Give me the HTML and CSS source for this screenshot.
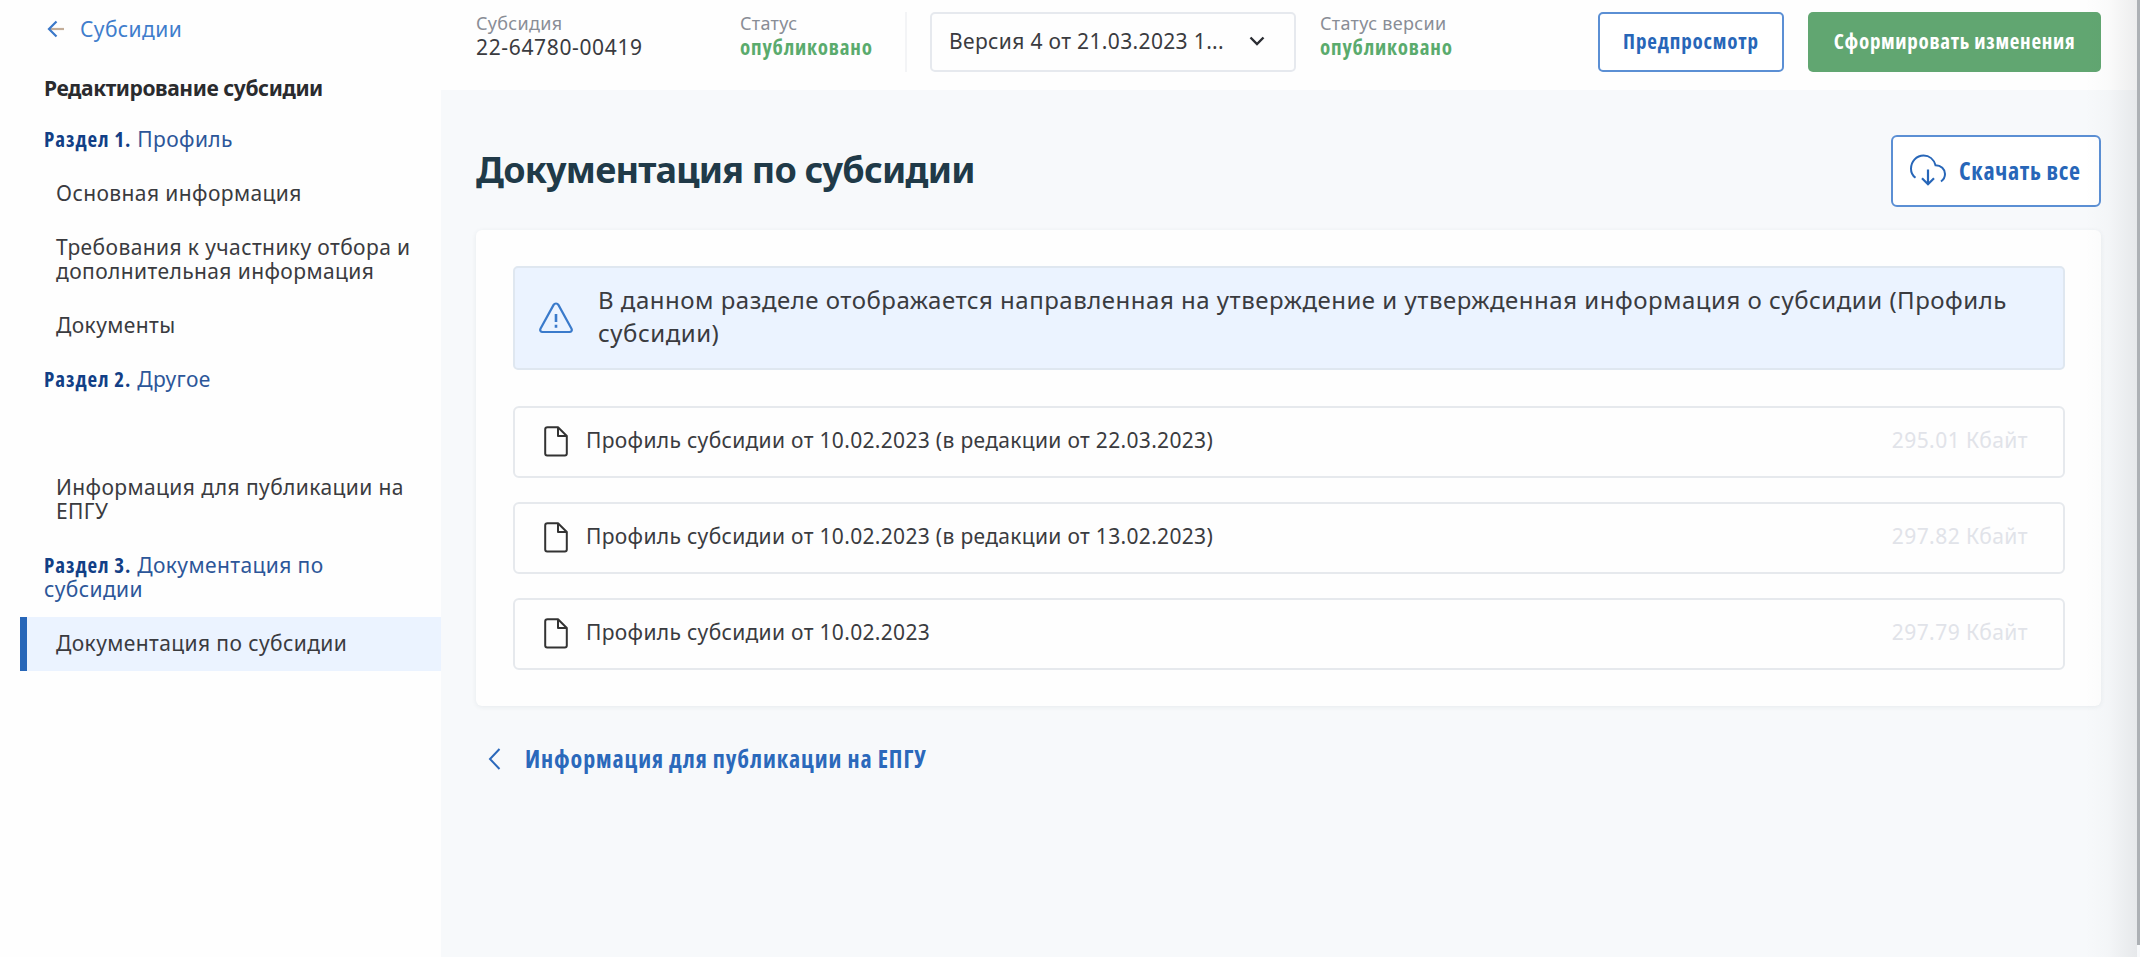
FILE: index.html
```html
<!DOCTYPE html>
<html lang="ru">
<head>
<meta charset="utf-8">
<title>Документация по субсидии</title>
<link rel="stylesheet" href="styles.css">
</head>
<body>
<div class="app">
  <aside class="sidebar">
    <a class="back">
      <svg class="back-icon" width="18" height="18" viewBox="0 0 18 18" fill="none" stroke-width="2.2"><path d="M3 9h14" stroke="#c3ad98"/><path d="M9.500 1.500 2 9l7.500 7.500" stroke="#3b78c9"/></svg>
      <span>Субсидии</span>
    </a>
    <div class="side-title">Редактирование субсидии</div>
    <nav class="nav">
      <div class="nav-section"><b>Раздел 1.</b> Профиль</div>
      <a class="nav-item">Основная информация</a>
      <a class="nav-item">Требования к участнику отбора и<br>дополнительная информация</a>
      <a class="nav-item">Документы</a>
      <div class="nav-section"><b>Раздел 2.</b> Другое</div>
      <a class="nav-item nav-empty"></a>
      <a class="nav-item">Информация для публикации на<br>ЕПГУ</a>
      <div class="nav-section"><b>Раздел 3.</b> Документация по<br>субсидии</div>
      <a class="nav-item active">Документация по субсидии</a>
    </nav>
  </aside>
  <div class="page">
    <header class="topbar">
      <div class="field field-id"><div class="label">Субсидия</div><div class="value">22-64780-00419</div></div>
      <div class="field field-status"><div class="label">Статус</div><div class="status">опубликовано</div></div>
      <div class="select"><span>Версия 4 от 21.03.2023 1...</span>
        <svg width="16" height="12" viewBox="0 0 16 12" fill="none" stroke="#2b2d33" stroke-width="2.400"><path d="M1.500 2.500 8 9l6.500-6.500"/></svg>
      </div>
      <div class="field field-version"><div class="label">Статус версии</div><div class="status">опубликовано</div></div>
      <button class="btn btn-outline">Предпросмотр</button>
      <button class="btn btn-green">Сформировать изменения</button>
    </header>
    <main class="content">
      <div class="heading">
        <h1>Документация по субсидии</h1>
        <button class="download">
          <svg width="36" height="32" viewBox="0 0 36 32" fill="none" stroke="#2766b8" stroke-width="2"><path d="M5.500 23.800C2.900 22 1 18.800 1 14.800 1 7.400 6.500 1.500 13.600 1.500c5.700 0 10.300 3.900 11.900 9.700C31 11.300 35 15.200 35 20c0 3.100-1.500 5.700-4 7.500"/><path d="M18 15.500v14.500M12 24.300l6 6 6-6" stroke-width="2.200"/></svg>
          <span>Скачать все</span>
        </button>
      </div>
      <section class="card">
        <div class="alert">
          <svg width="34" height="32" viewBox="0 0 34 32" fill="none" stroke="#3a7acb" stroke-width="2.200"><path d="M14.600 2.900c1.100-1.900 3.700-1.900 4.800 0l13 23.600c1 1.900 0 3.500-2 3.500H3.600c-2 0-3-1.600-2-3.500z"/><path d="M17 12v8M17 22.800v3" stroke-width="2.600"/></svg>
          <div class="alert-text">В данном разделе отображается направленная на утверждение и утвержденная информация о субсидии (Профиль<br>субсидии)</div>
        </div>
        <div class="doc">
          <svg class="doc-icon" width="24" height="31" viewBox="0 0 24 31" fill="none" stroke="#333" stroke-width="2" stroke-linejoin="round"><path d="M3.500 1.200H14L22.800 10v17.500a2 2 0 0 1-2 2H3.200a2 2 0 0 1-2-2v-24a2.300 2.300 0 0 1 2.300-2.300zM14 1.200V10h8.800"/></svg>
          <span class="doc-name">Профиль субсидии от 10.02.2023 (в редакции от 22.03.2023)</span><span class="doc-size">295.01 Кбайт</span>
        </div>
        <div class="doc">
          <svg class="doc-icon" width="24" height="31" viewBox="0 0 24 31" fill="none" stroke="#333" stroke-width="2" stroke-linejoin="round"><path d="M3.500 1.200H14L22.800 10v17.500a2 2 0 0 1-2 2H3.200a2 2 0 0 1-2-2v-24a2.300 2.300 0 0 1 2.300-2.300zM14 1.200V10h8.800"/></svg>
          <span class="doc-name">Профиль субсидии от 10.02.2023 (в редакции от 13.02.2023)</span><span class="doc-size">297.82 Кбайт</span>
        </div>
        <div class="doc">
          <svg class="doc-icon" width="24" height="31" viewBox="0 0 24 31" fill="none" stroke="#333" stroke-width="2" stroke-linejoin="round"><path d="M3.500 1.200H14L22.800 10v17.500a2 2 0 0 1-2 2H3.200a2 2 0 0 1-2-2v-24a2.300 2.300 0 0 1 2.300-2.300zM14 1.200V10h8.800"/></svg>
          <span class="doc-name">Профиль субсидии от 10.02.2023</span><span class="doc-size">297.79 Кбайт</span>
        </div>
      </section>
      <a class="prev">
        <svg width="13" height="22" viewBox="0 0 13 22" fill="none" stroke="#2b69bb" stroke-width="2"><path d="M11.500 1 2 11l9.500 10"/></svg>
        <span>Информация для публикации на ЕПГУ</span>
      </a>
    </main>
  </div>
  <div class="edge-shadow"></div>
  <div class="scroll-thumb"></div>
</div>
</body>
</html>
```

FILE: styles.css
```css
* { box-sizing: border-box; }
body { margin: 0; background: #fff; }
.app {
  position: relative;
  display: flex;
  width: 2140px;
  height: 957px;
  overflow: hidden;
  font-family: "Noto Sans", sans-serif;
  font-size: 21px;
  line-height: 24px;
  letter-spacing: 0.4px;
  color: #3a3b3f;
  background: #f7f9fb;
}
svg { display: block; flex: none; }

/* Sidebar */
.sidebar { flex: none; width: 441px; padding-top: 16px; background: #fefefe; }
.back { display: flex; align-items: center; gap: 15px; height: 26px; padding-left: 47px; color: #3f7dcc; }
.side-title { margin-top: 34px; padding-left: 44px; font-weight: 700; letter-spacing: -0.42px; color: #2a2b2e; }
.nav { margin-top: 13px; }
.nav-section { padding: 14px 0 16px 44px; color: #2c5699; }
.nav-section b { font-family: "Open Sans", sans-serif; font-stretch: 75%; letter-spacing: 0.95px; color: #123f86; }
.nav-item { display: block; min-height: 54px; padding: 14px 0 16px 56px; }
.nav-item.active { margin-left: 20px; padding-left: 29px; border-left: 7px solid #2766b8; background: #ebf3ff; }

/* Top bar */
.page { flex: 1; min-width: 0; }
.topbar { display: flex; align-items: flex-start; height: 90px; padding: 12px 39px 0 35px; background: #fefefe; }
.field { height: 60px; }
.label { margin-top: -1px; font-size: 18px; line-height: 24px; letter-spacing: 0.3px; color: #898d96; }
.value { letter-spacing: 0.65px; }
.status { font-family: "Open Sans", sans-serif; font-weight: 700; font-stretch: 75%; letter-spacing: 0.8px; color: #5aab6d; }
.field-id { width: 264px; }
.field-status { width: 167px; border-right: 2px solid #f3f4f6; }
.select {
  display: flex; align-items: center; justify-content: space-between;
  width: 366px; height: 60px; margin-left: 23px; padding: 0 29px 2px 17px;
  border: 2px solid #e6e9ee; border-radius: 5px; white-space: nowrap; letter-spacing: 0.35px;
}
.field-version { margin-left: 24px; }
.btn {
  height: 60px; padding: 0 0 2px; border-radius: 5px;
  font: 700 21px "Open Sans", sans-serif; font-stretch: 75%; letter-spacing: 0.85px; white-space: nowrap;
}
.btn-outline { width: 186px; margin-left: auto; border: 2px solid #5b8fd4; background: #fff; color: #2766b8; }
.btn-green { width: 293px; margin-left: 24px; border: 0; background: #61a671; color: #fff; letter-spacing: 0.7px; }

/* Content */
.content { padding: 45px 39px 0 35px; }
.heading { display: flex; justify-content: space-between; height: 72px; }
h1 { margin: 0; font-size: 36px; line-height: 69px; letter-spacing: -0.8px; color: #203a48; }
.download {
  display: flex; align-items: center; gap: 13px; width: 210px; height: 72px; padding: 0 0 2px 17px;
  border: 2px solid #5b8fd4; border-radius: 6px; background: #fff; color: #2766b8;
  font: 700 24px "Open Sans", sans-serif; font-stretch: 75%; letter-spacing: 0.7px; white-space: nowrap;
}
.card {
  display: flex; flex-direction: column; gap: 24px;
  height: 476px; margin-top: 23px; padding: 36px 36px 0 37px;
  border-radius: 6px; background: #fefefe; box-shadow: 0 1px 5px rgba(40, 60, 80, 0.08);
}
.alert {
  display: flex; align-items: center; gap: 25px; flex: none;
  height: 104px; margin-bottom: 12px; padding: 0 0 0 24px;
  border: 2px solid #dfe7f0; border-radius: 5px; background: #ebf3ff;
  font-size: 24px; line-height: 32.500px; letter-spacing: 0.51px; white-space: nowrap;
}
.alert-text { padding-bottom: 3px; }
.doc {
  display: flex; align-items: center; flex: none; height: 72px; padding: 0 35px 1px 29px;
  border: 2px solid #e6e9ed; border-radius: 6px; letter-spacing: 0.32px;
}
.doc-name, .doc-size { padding-bottom: 3px; }
.doc-name { flex: 1; margin-left: 18px; }
.doc-size { color: #e1e3e9; letter-spacing: 0.45px; }
.prev {
  display: flex; align-items: center; gap: 24px; height: 32px; margin-top: 37px; padding-left: 12px;
  font-family: "Open Sans", sans-serif; font-size: 24px; font-weight: 700; font-stretch: 75%; letter-spacing: 0.9px; color: #2b69bb;
}

/* Window edge */
.edge-shadow {
  position: absolute; top: 0; right: 3px; width: 52px; height: 957px;
  background: linear-gradient(to right, rgba(60, 65, 70, 0), rgba(60, 65, 70, 0.02) 45%, rgba(60, 65, 70, 0.09));
}
.scroll-thumb { position: absolute; top: 0; right: 0; width: 3px; height: 945px; background: #adb1b5; }
```
